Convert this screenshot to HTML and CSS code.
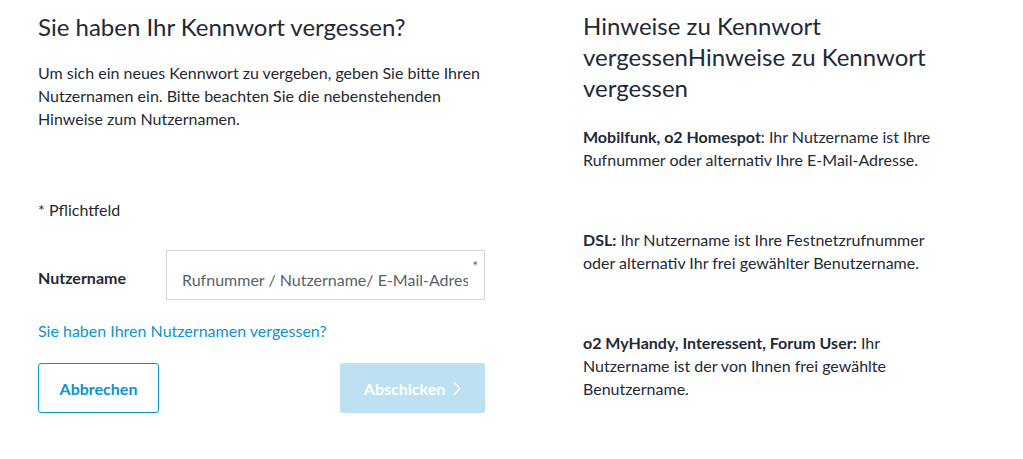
FILE: index.html
```html
<!DOCTYPE html>
<html lang="de">
<head>
  <meta charset="UTF-8">
  <title>Kennwort vergessen</title>
  <link rel="stylesheet" href="styles.css">
</head>
<body>
  <div class="page">
    <div class="form-col">
      <h1>Sie haben Ihr Kennwort vergessen?</h1>
      <p class="intro">Um sich ein neues Kennwort zu vergeben, geben Sie bitte Ihren Nutzernamen ein. Bitte beachten Sie die nebenstehenden Hinweise zum Nutzernamen.</p>

      <p class="required">* Pflichtfeld</p>

      <div class="form-row">
        <label for="username">Nutzername</label>
        <div class="field">
          <input type="text" id="username" placeholder="Rufnummer / Nutzername/ E-Mail-Adresse">
          <span class="star">*</span>
        </div>
      </div>

      <a class="forgot" href="#">Sie haben Ihren Nutzernamen vergessen?</a>

      <div class="buttons">
        <button class="btn-cancel">Abbrechen</button>
        <button class="btn-submit" disabled>Abschicken
          <svg width="8" height="15" viewBox="0 0 8 15"><path d="M1 1l6 6.5-6 6.5" fill="none" stroke="#fff" stroke-width="1.2"/></svg>
        </button>
      </div>
    </div>

    <div class="hints-col">
      <h2>Hinweise zu Kennwort vergessenHinweise zu Kennwort vergessen</h2>
      <p><b>Mobilfunk, o2 Homespot</b>: Ihr Nutzername ist Ihre Rufnummer oder alternativ Ihre E-Mail-Adresse.</p>
      <p><b>DSL:</b> Ihr Nutzername ist Ihre Festnetzrufnummer oder alternativ Ihr frei gewählter Benutzername.</p>
      <p><b>o2 MyHandy, Interessent, Forum User:</b> Ihr Nutzername ist der von Ihnen frei gewählte Benutzername.</p>
    </div>
  </div>
</body>
</html>
```

FILE: styles.css
```css
body {
  margin: 0;
  font-family: Lato, "Open Sans", sans-serif;
  color: #1f2a35;
  background: #fff;
}

.page {
  display: flex;
  padding: 10px 0 0 38px;
  gap: 98px;
}

.form-col {
  width: 447px;
}

h1 {
  font-size: 24px;
  font-weight: 400;
  margin: 0;
  line-height: 34px;
}

.intro {
  font-size: 16px;
  line-height: 23px;
  margin: 17px 0 0;
}

.required {
  font-size: 16px;
  margin: 68px 0 0;
  line-height: 23px;
}

.form-row {
  display: flex;
  align-items: center;
  margin-top: 29px;
}

.form-row label {
  width: 128px;
  padding-top: 5px;
  font-size: 16px;
  font-weight: 700;
}

.field {
  position: relative;
  flex: 1;
}

.field input {
  display: block;
  width: 100%;
  height: 50px;
  box-sizing: border-box;
  border: 1px solid #d4d8db;
  padding: 8px 16px 0 15px;
  font-family: inherit;
  font-size: 16px;
  color: #1f2a35;
  outline: none;
}

.field input::placeholder {
  color: #5a6268;
}

.star {
  position: absolute;
  right: 7px;
  top: 8px;
  font-size: 13px;
  color: #5a6268;
}

.forgot {
  display: block;
  margin-top: 19px;
  font-size: 16px;
  line-height: 23px;
  color: #0f92d0;
  text-decoration: none;
}

.buttons {
  display: flex;
  justify-content: space-between;
  margin-top: 21px;
}

.buttons button {
  height: 50px;
  border-radius: 3px;
  font-family: inherit;
  font-size: 16px;
  font-weight: 700;
}

.btn-cancel {
  width: 121px;
  background: #fff;
  border: 1px solid #0f92d0;
  color: #0f92d0;
}

.btn-submit {
  width: 145px;
  background: #bde1f3;
  border: none;
  color: #fff;
  display: flex;
  align-items: center;
  justify-content: center;
  gap: 8px;
}

.hints-col {
  width: 365px;
}

h2 {
  font-size: 24px;
  font-weight: 400;
  line-height: 31px;
  margin: 0;
}

.hints-col p {
  font-size: 16px;
  line-height: 23px;
  margin: 22px 0 0;
}

.hints-col p + p {
  margin-top: 57px;
}
```
